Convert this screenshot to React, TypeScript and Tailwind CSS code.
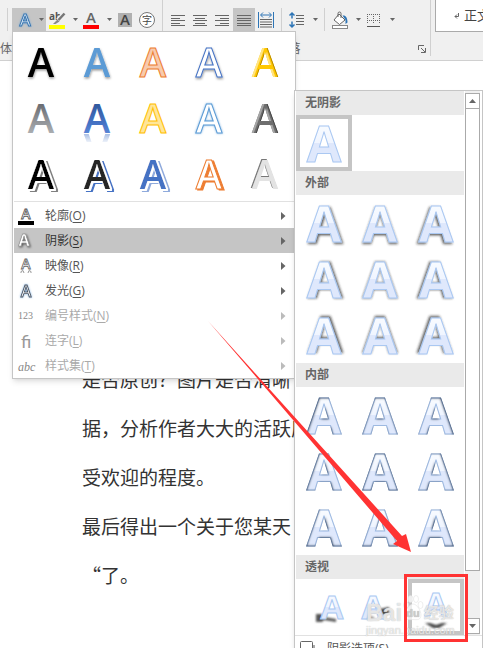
import type { ReactNode } from 'react'

type Preset = {
  name: string
  fill: string
  stroke?: string
  filter?: string
  reflection?: boolean
}

const UI_FONT = "font-['Open_Sans','Noto_Sans_CJK_SC',sans-serif]"

const presets: Preset[] = [
  { name: '黑色', fill: '#000', filter: 'url(#drop)' },
  { name: '蓝色', fill: '#5b9bd5', filter: 'url(#drop)' },
  { name: '橙色', fill: '#f8cbad', stroke: '#ed7d31' },
  { name: '蓝色轮廓', fill: '#fff', stroke: '#4472c4', filter: 'url(#drop)' },
  { name: '金色棱台', fill: '#ffc800', filter: 'url(#bevelGold)' },
  { name: '灰色渐变', fill: 'url(#gray)' },
  { name: '蓝色映像', fill: 'url(#blue)', reflection: true },
  { name: '金色', fill: '#ffe699', stroke: '#ffc000' },
  { name: '蓝色发光', fill: '#fff', stroke: '#5b9bd5', filter: 'url(#halo)' },
  { name: '灰色棱台', fill: '#6e6e6e', filter: 'url(#bevelGray)' },
  { name: '黑色阴影', fill: '#000', filter: 'url(#longGray)' },
  { name: '黑色蓝影', fill: '#262626', filter: 'url(#longBlue)' },
  { name: '蓝色蓝影', fill: '#4472c4', filter: 'url(#longLight)' },
  { name: '橙色阴影', fill: '#fff', stroke: '#ed7d31', filter: 'url(#solidOrange)' },
  { name: '浅灰', fill: '#e3e3e3', filter: 'url(#edge)' },
]

const menuItems = [
  { label: '轮廓', key: 'O', icon: 'outline' },
  { label: '阴影', key: 'S', icon: 'shadow', active: true },
  { label: '映像', key: 'R', icon: 'reflect' },
  { label: '发光', key: 'G', icon: 'glow' },
  { label: '编号样式', key: 'N', icon: 'numbers', disabled: true },
  { label: '连字', key: 'L', icon: 'ligature', disabled: true },
  { label: '样式集', key: 'T', icon: 'sets', disabled: true },
]

// direction of the shadow for the nine swatches of a section
const directions = [[1, 1], [0, 1], [-1, 1], [1, 0], [0, 0], [-1, 0], [1, -1], [0, -1], [-1, -1]]

const longShadows = [
  { id: 'longGray', color: '#7f7f7f' },
  { id: 'longBlue', color: '#4472c4' },
  { id: 'longLight', color: '#8faadc' },
]

const bevels = [
  { id: 'bevelGold', light: '#ffe680', dark: '#b38600' },
  { id: 'bevelGray', light: '#a6a6a6', dark: '#444' },
]

const paragraphs = ['是否原创？图片是否清晰', '据，分析作者大大的活跃度', '受欢迎的程度。', '最后得出一个关于您某天', '“了。']

function Defs() {
  return (
    <svg width="0" height="0" className="absolute" aria-hidden="true">
      <defs>
        <filter id="drop" x="-20%" y="-20%" width="150%" height="150%">
          <feDropShadow dx="0.5" dy="1.5" stdDeviation="1" floodOpacity="0.4" />
        </filter>
        <filter id="halo" x="-20%" y="-20%" width="150%" height="150%">
          <feDropShadow dx="0" dy="0" stdDeviation="1" floodColor="#5b9bd5" floodOpacity="0.7" />
        </filter>
        <filter id="solidOrange" x="-20%" y="-20%" width="150%" height="150%">
          <feDropShadow dx="2" dy="1" stdDeviation="0" floodColor="#ed7d31" />
        </filter>
        <filter id="edge" x="-20%" y="-20%" width="150%" height="150%">
          <feDropShadow dx="-1" dy="-1" stdDeviation="0.3" floodColor="#777" />
        </filter>
        <filter id="blur" x="-50%" y="-80%" width="200%" height="260%">
          <feGaussianBlur stdDeviation="1" />
        </filter>
        <filter id="shade" x="-20%" y="-20%" width="150%" height="150%">
          <feDropShadow dx="1" dy="1" stdDeviation="1" floodOpacity="0.6" />
        </filter>
        {longShadows.map((s) => (
          <filter key={s.id} id={s.id} x="-20%" y="-20%" width="150%" height="150%">
            <feMorphology in="SourceAlpha" operator="dilate" radius="0.5" result="fat" />
            <feOffset in="fat" dx="3" dy="2" result="far" />
            <feFlood floodColor={s.color} />
            <feComposite in2="far" operator="in" result="back" />
            <feOffset in="fat" dx="1" dy="1" result="near" />
            <feFlood floodColor="#fff" />
            <feComposite in2="near" operator="in" result="gap" />
            <feMerge>
              <feMergeNode in="back" />
              <feMergeNode in="gap" />
              <feMergeNode in="SourceGraphic" />
            </feMerge>
          </filter>
        ))}
        {bevels.map((b) => (
          <filter key={b.id} id={b.id} x="-20%" y="-20%" width="150%" height="150%">
            <feOffset in="SourceAlpha" dx="-1.5" dy="0" result="l" />
            <feOffset in="SourceAlpha" dx="1.5" dy="0" result="r" />
            <feFlood floodColor={b.dark} />
            <feComposite in2="l" operator="out" />
            <feComposite in2="SourceAlpha" operator="in" result="dark" />
            <feFlood floodColor={b.light} />
            <feComposite in2="r" operator="out" />
            <feComposite in2="SourceAlpha" operator="in" result="light" />
            <feMerge>
              <feMergeNode in="SourceGraphic" />
              <feMergeNode in="light" />
              <feMergeNode in="dark" />
            </feMerge>
          </filter>
        ))}
        <linearGradient id="gray" x2="0" y2="1">
          <stop offset="0.2" stopColor="#63666c" />
          <stop offset="0.8" stopColor="#adb0b3" />
        </linearGradient>
        <linearGradient id="blue" x2="0" y2="1">
          <stop offset="0.2" stopColor="#2f5597" />
          <stop offset="0.6" stopColor="#4472c4" />
          <stop offset="0.8" stopColor="#5b87d6" />
        </linearGradient>
        <linearGradient id="fade" x1="0" x2="0" y1="44" y2="53" gradientUnits="userSpaceOnUse">
          <stop offset="0" stopColor="#fff" stopOpacity="0.5" />
          <stop offset="1" stopColor="#fff" stopOpacity="0.1" />
        </linearGradient>
        <mask id="fadeMask" maskUnits="userSpaceOnUse" x="0" y="44" width="56" height="9">
          <rect y="44" width="56" height="9" fill="url(#fade)" />
        </mask>
        <linearGradient id="glass" x1="0" x2="0" y1="11" y2="47" gradientUnits="userSpaceOnUse">
          <stop offset="0" stopColor="#f8fbff" />
          <stop offset="0.47" stopColor="#f0f5ff" />
          <stop offset="0.48" stopColor="#dfe8fc" />
          <stop offset="1" stopColor="#dfe8fc" />
        </linearGradient>
        {directions.map(([dx, dy], i) => (
          <filter key={i} id={`outer${i}`} x="-20%" y="-20%" width="140%" height="140%">
            <feDropShadow dx={dx * 1.5} dy={dy * 1.5} stdDeviation="1.2" floodColor="#222" floodOpacity="0.7" />
          </filter>
        ))}
        {directions.map(([dx, dy], i) => (
          <filter key={i} id={`inner${i}`} x="-10%" y="-10%" width="120%" height="120%">
            <feComponentTransfer in="SourceAlpha" result="hole">
              <feFuncA type="table" tableValues="1 0" />
            </feComponentTransfer>
            <feGaussianBlur in="hole" stdDeviation="1" />
            <feOffset dx={dx} dy={dy} />
            <feComponentTransfer result="soft">
              <feFuncA type="linear" slope={dx || dy ? 1.2 : 2} />
            </feComponentTransfer>
            <feFlood floodColor="#3a4a62" floodOpacity="0.85" />
            <feComposite in2="soft" operator="in" />
            <feComposite in2="SourceAlpha" operator="in" result="dark" />
            <feMerge>
              <feMergeNode in="SourceGraphic" />
              <feMergeNode in="dark" />
            </feMerge>
          </filter>
        ))}
      </defs>
    </svg>
  )
}

function PresetArt({ fill, stroke, filter, reflection }: Preset) {
  return (
    <svg width="56" height="56" viewBox="0 0 56 56" className="overflow-visible font-['Open_Sans'] font-semibold" fontSize="40" textAnchor="middle">
      <text x="28" y="44" fill={fill} stroke={stroke} filter={filter}>A</text>
      {reflection && (
        <g mask="url(#fadeMask)">
          <text x="28" y="-45" transform="scale(1 -1)" fill="#4472c4">A</text>
        </g>
      )}
    </svg>
  )
}

function GlassA({ filter, x = 28, y = 47, size = 50, stroke = '#aac8f2' }: { filter?: string; x?: number; y?: number; size?: number; stroke?: string }) {
  return (
    <text x={x} y={y} fontSize={size} textAnchor="middle" fill="url(#glass)" stroke={stroke} filter={filter} className="font-['Open_Sans'] font-bold">
      A
    </text>
  )
}

function Swatch({ label, selected, children }: { label: string; selected?: boolean; children: ReactNode }) {
  return (
    <button aria-label={label} className={selected ? 'size-14 outline-4 -outline-offset-4 outline-[#c5c5c5]' : 'size-14'}>
      <svg width="56" height="56" viewBox="0 0 56 56" className="overflow-visible">{children}</svg>
    </button>
  )
}

function SectionTitle({ children }: { children: ReactNode }) {
  return <h2 className="h-6 bg-[#eaeaea] pl-[9px] text-xs leading-6 font-bold text-[#666]">{children}</h2>
}

function Caret() {
  return (
    <svg width="5" height="3" viewBox="0 0 5 3" className="shrink-0">
      <path d="M0 0h5L2.500 3z" fill="#666" />
    </svg>
  )
}

function Tool({ label, active, caret, children }: { label: string; active?: boolean; caret?: boolean; children: ReactNode }) {
  return (
    <button
      aria-label={label}
      className={`flex h-[23px] shrink-0 items-center ${caret ? 'w-[34px] gap-2 pl-[3px]' : 'w-[22px] justify-center'} ${active ? 'bg-[#c5c5c5]' : ''}`}
    >
      <svg width="16" height="18" viewBox="0 0 16 18" className="shrink-0 overflow-visible font-['Open_Sans']">{children}</svg>
      {caret && <Caret />}
    </button>
  )
}

function Lines({ rows }: { rows: number[][] }) {
  return (
    <>
      {rows.map(([x, w], i) => (
        <rect key={i} x={x} y={4 + i * 2.5} width={w} height="1" fill="#666" shapeRendering="crispEdges" />
      ))}
    </>
  )
}

function Separator() {
  return <div className="h-[23px] w-px shrink-0 bg-[#d0d0d0]" />
}

function Ribbon() {
  return (
    <header className="flex h-[61px] border-b border-[#d0d0d0] bg-[#f0f0f0] text-xs text-[#666]">
      <div className="flex w-[163px] shrink-0 flex-col border-r border-[#d0d0d0]">
        <div className="flex items-center pt-2 pl-[7px]">
          <Separator />
          <div className="ml-1 flex">
            <Tool label="文本效果" active caret>
              <text x="10" y="15" fontSize="17" fontWeight="600" textAnchor="middle" fill="#e4f0fa" stroke="#3a76b0" filter="url(#halo)">A</text>
            </Tool>
            <Tool label="突出显示" caret>
              <text x="0" y="9" fontSize="10" fontWeight="700" fill="#555">ab</text>
              <path d="M15.500 2.500L9 9.500" stroke="#f0f0f0" strokeWidth="5" />
              <path d="M15.500 2.500L9.500 9" stroke="#777" strokeWidth="2.500" />
              <path d="M8.500 8.500l2 2-4 2.500H4z" fill="#888" />
              <rect y="14" width="16" height="4" fill="#ff0" />
            </Tool>
            <Tool label="字体颜色" caret>
              <text x="8" y="12" fontSize="15" fontWeight="600" textAnchor="middle" fill="#666">A</text>
              <rect y="14" width="16" height="4" fill="#f00" />
            </Tool>
            <Tool label="字符底纹">
              <rect x="1" y="2" width="14" height="14" fill="#b0b0b0" />
              <text x="8" y="14" fontSize="15" fontWeight="600" textAnchor="middle" fill="#444">A</text>
            </Tool>
            <Tool label="带圈字符">
              <circle cx="8" cy="9" r="7.500" fill="#fff" stroke="#777" />
              <text x="8" y="13" fontSize="10" textAnchor="middle" fill="#444" className="font-['Noto_Sans_CJK_SC',sans-serif]">字</text>
            </Tool>
          </div>
        </div>
        <div className="mt-[9px] leading-[18px]">体</div>
      </div>
      <div className="flex w-[267px] shrink-0 flex-col">
        <div className="flex items-center pt-2 pl-1">
          <Tool label="左对齐"><Lines rows={[[1, 14], [1, 9], [1, 14], [1, 9], [1, 14]]} /></Tool>
          <Tool label="居中"><Lines rows={[[1, 14], [3, 10], [1, 14], [3, 10], [1, 14]]} /></Tool>
          <Tool label="右对齐"><Lines rows={[[1, 14], [6, 9], [1, 14], [6, 9], [1, 14]]} /></Tool>
          <Tool label="两端对齐" active><Lines rows={[[1, 14], [1, 14], [1, 14], [1, 14], [1, 14]]} /></Tool>
          <Tool label="分散对齐">
            <path d="M.5 1v16M15.500 1v16M3 4h10M5 1.500L2.500 4 5 6.500M11 1.500L13.500 4 11 6.500" fill="none" stroke="#2e75b6" />
            <path d="M2 8.500h12M2 11h12M2 13.500h12M2 16h12" stroke="#666" />
          </Tool>
          <div className="ml-1 flex items-center gap-1">
            <Separator />
            <Tool label="行距" caret>
              <path d="M3 2v14M.5 4.500L3 2l2.500 2.500M.5 13.500L3 16l2.500-2.500" fill="none" stroke="#2e75b6" strokeWidth="1.500" />
              <path d="M3 7.500v3" stroke="#f0f0f0" strokeWidth="3" />
              <path d="M7 4.500h8M7 7.500h8M7 10.500h8M7 13.500h8" stroke="#666" />
            </Tool>
            <Separator />
            <Tool label="底纹" caret>
              <path d="M7 3l6 6-5.500 4.500L2 9z" fill="#fff" stroke="#666" />
              <path d="M6 6V2.500a1.500 1.500 0 0 1 3 0V7" fill="none" stroke="#666" />
              <path d="M10.500 4.500c3-.5 5 1.500 5 7l-2 1.500V9z" fill="#2e75b6" />
              <rect x=".5" y="14.500" width="15" height="3" fill="#fff" stroke="#888" />
            </Tool>
            <div className="-ml-1">
              <Tool label="边框" caret>
                <path d="M1.500 3v10M7.500 3v10M13.500 3v10M1 3.500h13M1 9.500h13" stroke="#666" strokeDasharray="1 1" shapeRendering="crispEdges" />
                <path d="M1 15.500h13" stroke="#555" />
              </Tool>
            </div>
          </div>
        </div>
        <div className="mt-[9px] flex items-center">
          <span className="flex-1 text-center leading-[18px]">段落</span>
          <button aria-label="段落设置" className="flex w-4 justify-center">
            <svg width="8" height="8" viewBox="0 0 8 8">
              <path d="M.5 5V.5H6M3 3l4 4M7.500 3v4.500H3" fill="none" stroke="#666" />
            </svg>
          </button>
        </div>
      </div>
      <div className="h-14 w-px shrink-0 bg-[#d0d0d0]" />
      <div className="ml-1 flex h-8 flex-1 items-center overflow-hidden border-b border-l border-[#aaa] bg-white pl-[18px] text-[13px] whitespace-nowrap text-[#444]">
        <svg width="6" height="6" viewBox="0 0 6 6" className="mr-1 shrink-0">
          <path d="M4.500 0v3.500H1M3 1.500l-2 2 2 2" fill="none" stroke="#666" />
        </svg>
        正文
      </div>
    </header>
  )
}

function MenuIcon({ name }: { name: string }) {
  const a = { x: 8, textAnchor: 'middle' as const, fontWeight: 600, fill: '#fff' }
  return (
    <svg width="16" height="18" viewBox="0 0 16 18" className="shrink-0 overflow-visible font-['Open_Sans']">
      {name === 'outline' && (
        <>
          <text {...a} y="12" fontSize="14" stroke="#555" strokeWidth="0.8">A</text>
          <rect y="14" width="16" height="4" fill="#000" />
        </>
      )}
      {name === 'shadow' && <text {...a} x={6} y="14" fontSize="16" fontWeight="700" stroke="#777" strokeWidth="0.5" filter="url(#shade)">A</text>}
      {name === 'reflect' && (
        <>
          <text {...a} y="12" fontSize="14" stroke="#666" strokeWidth="0.8">A</text>
          <path d="M3 16v-1.500l2-1 1 2.500M10 16l1-2.500 2 1V16" fill="none" stroke="#999" />
        </>
      )}
      {name === 'glow' && <text {...a} y="15" fontSize="16" stroke="#4b5563" strokeWidth="0.9" filter="url(#halo)">A</text>}
      {name === 'numbers' && <text x="0" y="12" fontSize="10" fill="#888" className="font-['Liberation_Serif']">123</text>}
      {name === 'ligature' && <text x="3" y="16" fontSize="18" fill="#999" className="font-['Lato']">fi</text>}
      {name === 'sets' && <text x="0" y="14" fontSize="12" fontStyle="italic" fill="#888" className="font-['Liberation_Serif']">abc</text>}
    </svg>
  )
}

function EffectsMenu() {
  return (
    <div className="absolute top-[31px] left-3 w-[284px] border border-[#c5c5c5] bg-white pt-px shadow-md">
      <div className="grid w-[280px] grid-cols-5">
        {presets.map((p) => (
          <button key={p.name} aria-label={p.name} className="size-14">
            <PresetArt {...p} />
          </button>
        ))}
      </div>
      <div className="mx-px mb-px h-px bg-[#e1e1e1]" />
      <ul className="px-px">
        {menuItems.map((item) => (
          <li key={item.key}>
            <button
              disabled={item.disabled}
              className={`flex h-[25px] w-full items-center pr-2 pl-1 text-xs ${item.active ? 'bg-[#c5c5c5] text-[#333]' : item.disabled ? 'text-[#aaa]' : 'text-[#555]'}`}
            >
              <MenuIcon name={item.icon} />
              <span className="ml-[11px] flex-1 text-left">
                {item.label}(<u className="underline-offset-2">{item.key}</u>)
              </span>
              <svg width="5" height="8" viewBox="0 0 5 8">
                <path d="M0 0l4.500 4L0 8z" fill={item.disabled ? '#bbb' : '#666'} />
              </svg>
            </button>
          </li>
        ))}
      </ul>
    </div>
  )
}

function ShadowMenu() {
  return (
    <div className="absolute top-[90px] left-[294px] w-[189px] border border-[#c5c5c5] bg-white shadow-md">
      <div className="flex gap-px border-b border-[#e1e1e1] pl-px">
        <div className="w-[168px]">
          <SectionTitle>无阴影</SectionTitle>
          <div className="flex">
            <Swatch label="无阴影" selected><GlassA /></Swatch>
          </div>
          <SectionTitle>外部</SectionTitle>
          <div className="grid grid-cols-3">
            {directions.map((_, i) => (
              <Swatch key={i} label={`外部 ${i + 1}`}><GlassA filter={`url(#outer${i})`} /></Swatch>
            ))}
          </div>
          <SectionTitle>内部</SectionTitle>
          <div className="grid grid-cols-3">
            {directions.map((_, i) => (
              <Swatch key={i} label={`内部 ${i + 1}`}><GlassA filter={`url(#inner${i})`} stroke="#a3bfe8" /></Swatch>
            ))}
          </div>
          <SectionTitle>透视</SectionTitle>
          <div className="grid grid-cols-3">
            <Swatch label="透视 1">
              <path d="M20 35h6l2 3 12 2v3l-12-2-2 2h-6z" fill="#555" filter="url(#blur)" />
              <GlassA x={36} y={40} size={33} />
            </Swatch>
            <Swatch label="透视 2">
              <path d="M28 30l9-2v6l-4 2h-7z" fill="#444" filter="url(#blur)" />
              <path d="M12 39l8-2 3 2-4 2z" fill="#999" filter="url(#blur)" />
              <GlassA x={21} y={40} size={33} />
            </Swatch>
            <Swatch label="透视 3" selected>
              <path d="M17 44l5 0 6 2 6-2h5l-8 5h-6z" fill="#444" filter="url(#blur)" />
              <GlassA x={28} y={37} size={33} />
            </Swatch>
          </div>
        </div>
        <div className="flex w-[15px] flex-col bg-[#f0f0f0] pt-0.5 pb-px">
          <button aria-label="向上滚动" className="flex h-4 items-center justify-center border border-[#aaa] bg-white">
            <svg width="7" height="4" viewBox="0 0 7 4"><path d="M0 4h7L3.500 0z" fill="#666" /></svg>
          </button>
          <div className="h-[462px] border border-t-0 border-[#aaa] bg-white" />
          <div className="flex-1" />
          <button aria-label="向下滚动" className="flex h-4 items-center justify-center border border-[#aaa] bg-white">
            <svg width="7" height="4" viewBox="0 0 7 4"><path d="M0 0h7L3.500 4z" fill="#666" /></svg>
          </button>
        </div>
      </div>
      <button className="flex h-[25px] w-full items-center gap-3 pl-[5px] text-xs text-[#555]">
        <svg width="15" height="15" viewBox="0 0 15 15">
          <path d="M14 4v10H3" fill="none" stroke="#aaa" strokeWidth="2" />
          <rect x=".5" y=".5" width="12" height="12" rx="1" fill="#fff" stroke="#666" />
        </svg>
        <span>阴影选项(<u>S</u>)...</span>
      </button>
    </div>
  )
}

function Watermark() {
  return (
    <div className="pointer-events-none absolute top-[602px] left-[366px] font-['Liberation_Sans','Noto_Sans_CJK_SC',sans-serif] text-white/70 [text-shadow:0_0_1px_#aaa]">
      <div className="flex items-center leading-[22px] font-bold">
        <span className="text-[23px]">Bai</span>
        <svg width="22" height="28" viewBox="0 0 22 28" className="-mt-3 overflow-visible">
          <g fill="#fff" fillOpacity="0.7" stroke="#ddd" strokeWidth="0.5">
            <ellipse cx="4" cy="12" rx="2.500" ry="3.500" />
            <ellipse cx="8.500" cy="6" rx="2.500" ry="3.500" />
            <ellipse cx="14" cy="6" rx="2.500" ry="3.500" />
            <ellipse cx="18.500" cy="12" rx="2.500" ry="3.500" />
            <path d="M11 11c4 0 8 7 8 11 0 5-4 5-8 4.500-4 .5-8 .5-8-4.500 0-4 4-11 8-11z" />
          </g>
          <text x="11" y="24" fontSize="11" textAnchor="middle" fill="#ccc">du</text>
        </svg>
        <span className="text-[15px]">经验</span>
      </div>
      <div className="text-[11px] leading-3">jingyan.baidu.com</div>
    </div>
  )
}

export default function App() {
  return (
    <div className={`relative h-screen overflow-hidden bg-white ${UI_FONT}`}>
      <Defs />
      <Ribbon />
      <main className="pt-[293px] pl-[82px] font-['Noto_Sans_CJK_SC',sans-serif] text-[19px] leading-[49px] whitespace-nowrap text-[#333]">
        {paragraphs.map((p) => (
          <p key={p}>{p}</p>
        ))}
      </main>
      <EffectsMenu />
      <ShadowMenu />
      <Watermark />
      {/* callout on the chosen shadow */}
      <svg width="483" height="648" viewBox="0 0 483 648" className="pointer-events-none absolute top-0 left-0">
        <path d="M208 321L402 536l4-2 5 18-18-8 4-3z" fill="#f33" />
      </svg>
      <div className="pointer-events-none absolute top-[574px] left-[404px] h-[68px] w-16 border-3 border-[#f33]" />
    </div>
  )
}
